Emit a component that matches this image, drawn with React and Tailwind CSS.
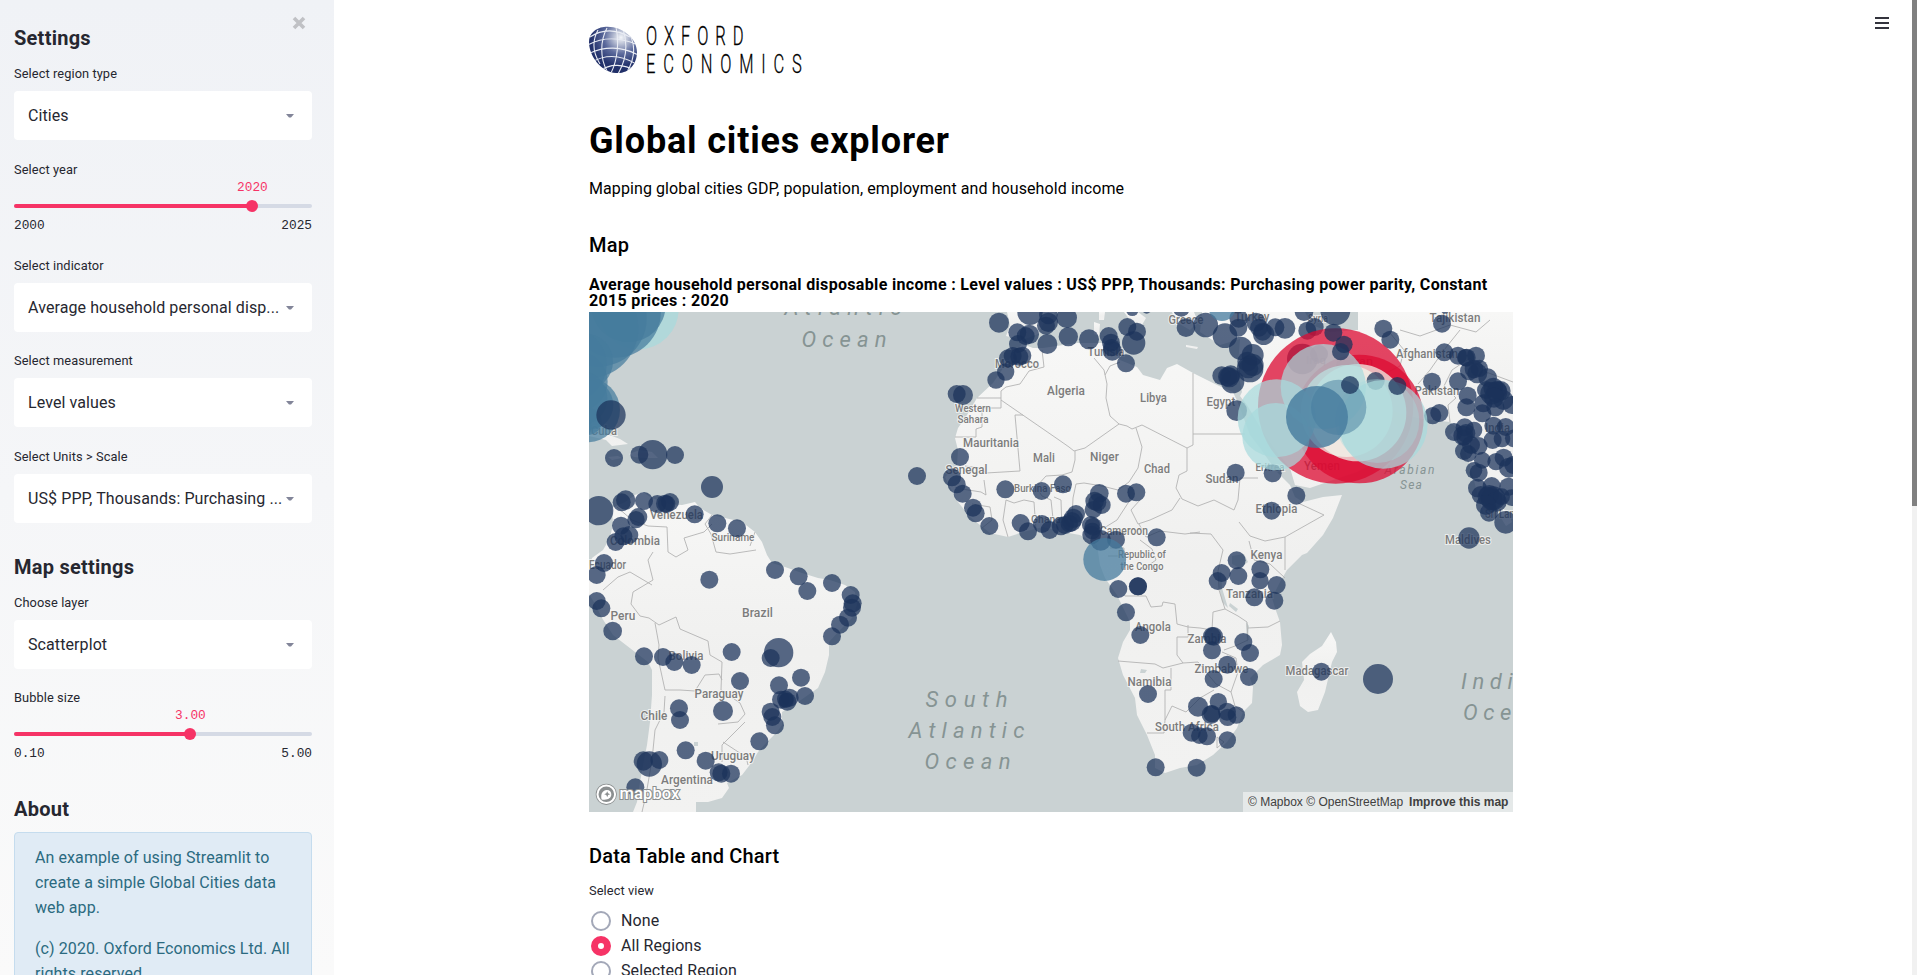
import React from "react";

const LAND = [
  // South America
  "M589 568 592 558 603 550 610 538 613 524 612 508 625 502 635 495 643 492 652 498 668 504 682 505 695 502 700 508 712 515 725 518 742 522 755 532 762 542 767 555 772 563 785 567 802 573 818 578 830 580 845 585 855 592 857 605 852 618 838 632 829 642 829 655 825 672 818 688 798 702 782 712 782 725 777 732 767 742 758 752 752 762 742 775 727 783 729 788 722 798 708 802 696 802 696 812 633 812 637 802 640 782 645 755 647 745 650 722 652 695 652 670 648 662 635 652 613 635 602 618 595 604 589 594Z",
  // Africa
  "M1022 344 1010 358 993 383 977 398 967 415 958 428 955 438 958 450 957 465 945 477 950 487 958 502 970 517 990 533 1008 537 1023 532 1043 527 1063 532 1080 535 1097 545 1100 565 1105 578 1117 595 1130 622 1130 630 1123 642 1118 658 1123 675 1135 698 1137 715 1147 735 1155 755 1155 768 1165 773 1180 768 1197 765 1213 755 1227 742 1237 728 1243 712 1252 703 1253 687 1250 678 1263 665 1280 655 1282 645 1280 622 1275 608 1272 598 1280 582 1287 570 1302 555 1307 553 1323 535 1333 518 1342 495 1323 497 1303 502 1295 497 1290 485 1277 472 1260 448 1250 435 1240 408 1233 392 1217 385 1193 373 1177 364 1167 368 1160 380 1143 375 1137 367 1120 360 1117 350 1103 343 1077 343 1043 348 1033 348Z",
  // Iberia and southern Europe
  "M1007 312 1010 325 1006 336 1022 340 1038 334 1044 322 1056 312Z",
  "M1099 312 1099 320 1104 320 1105 312Z",
  "M1124 312 1130 320 1142 325 1146 318 1138 312Z",
  "M1172 312 1176 322 1190 330 1198 322 1194 312Z",
  "M1094 322 1100 324 1099 336 1094 334Z",
  "M1186 345 1198 347 1197 349 1186 347Z",
  // Asia
  "M1202 312 1200 332 1220 345 1240 339 1238 365 1240 382 1242 392 1240 396 1247 405 1263 432 1277 452 1290 468 1295 485 1310 488 1333 480 1357 472 1377 462 1397 448 1403 432 1390 418 1377 415 1363 405 1356 388 1380 405 1400 414 1423 419 1450 422 1457 428 1450 435 1463 445 1470 465 1477 492 1483 512 1490 518 1500 505 1513 492 1513 312 1358 312 1358 330 1330 332 1312 325 1305 312Z",
  "M1503 509 1508 512 1512 522 1506 526 1501 518Z",
  // Madagascar
  "M1331 632 1336 642 1337 652 1332 662 1325 692 1318 710 1308 712 1300 706 1297 692 1304 680 1302 662 1310 654 1322 646Z",
  // Caribbean islands
  "M589 430 602 434 612 436 620 439 628 444 612 446 606 440 589 436Z",
  "M629 454 640 450 652 452 658 458 645 458 634 457Z",
  "M608 457 618 456 622 458 612 460Z",
];

const BORDERS =
  "M1001 391V408H982V427L976 429 976 437H955M977 398H1001M1001 400 1059 440 1069 447 1074 451 1085 448 1119 424 1127 426 1132 429 1142 425 1187 448V471L1179 475 1176 488 1182 499M1075 451V460L1072 472 1062 475 1046 476 1036 487M1001 391 1006 387 1020 384 1029 371 1044 367 1042 350M1015 415 1020 471 986 473 981 468 965 466M1015 415H1023M1107 384 1104 370 1094 358M1107 384 1106 398 1110 416 1119 424M1105 375 1110 366 1120 362M1193 373V445L1187 448M1193 434H1245M1136 428 1142 447 1138 468 1129 482 1118 490 1102 486 1084 483 1076 484 1073 498 1072 520M962 489 981 492 986 495 984 480M972 504 990 507 992 520 982 528M1008 537 1003 520 1006 500 1014 503 1024 500 1034 502 1036 530M1054 528 1051 500 1042 496 1036 487M1062 531 1061 500 1054 497M1104 528 1117 520 1130 500 1128 488M1140 500 1131 510 1138 524 1150 520 1172 510 1180 498M1182 499 1198 506 1214 500 1234 510 1238 500 1240 478 1258 478M1139 524 1146 537 1160 531 1185 534 1200 532M1140 540 1152 549 1156 560 1142 570M1108 556 1124 556 1124 548 1110 548M1239 522 1250 536 1265 541 1285 537 1324 515 1298 503M1249 541 1254 560 1270 564 1285 578M1285 537V570M1190 533 1211 534 1223 550 1218 571 1219 590 1225 609M1125 596H1146L1151 607 1162 606 1163 602 1175 604 1177 624 1188 627 1200 628 1212 630 1213 612 1225 609 1238 616 1247 622 1248 640 1235 646 1224 650M1248 628 1268 627 1280 621M1177 637V655L1183 663 1163 668 1155 664 1118 661M1177 637H1188V625M1183 663 1198 662 1206 672 1216 684 1231 692 1238 672 1236 658 1222 652M1171 668V690H1165V720L1172 706 1186 712 1200 698 1214 690M1231 692 1235 706 1243 712M1165 720 1164 733H1147M1217 737 1224 742 1217 748ZM617 507 632 520 648 526 667 527 668 552 676 557 688 550 684 538 704 532 712 524M712 515 705 524 711 534 716 552 730 554 756 550M755 532 750 546M653 580 633 592 631 604 640 616 649 618 659 625 676 617 680 629 708 641 710 655 722 662 721 690 740 703 745 714 738 722 718 724M653 580 648 560 653 552M655 623 659 645 658 658 665 690 680 690 695 691 705 675 719 674 722 680M665 696 664 712 655 730 652 760 646 795 642 812M745 722 732 735 722 745 722 762M723 742 746 757 748 765M603 590 618 577 630 572 652 585M1390 333 1404 350 1400 366 1384 374 1367 370M1460 330 1444 350 1430 370 1418 384M1400 330 1420 336 1450 325 1476 332 1490 320M1450 422 1448 405 1456 398 1444 386 1452 370 1470 358 1486 372 1513 382";

// Tiles hold marker lists [x, y, r] at three units per map pixel.
const TILES = [
  {
    x: 585, y: 305,
    dots: [
      [78, 330, 44], [87, 459, 27], [163, 449, 27], [203, 449, 44], [270, 450, 27], [381, 546, 33], [41, 617, 44],
      [122, 585, 29], [110, 592, 27], [177, 588, 27], [217, 597, 27], [240, 596, 27], [255, 591, 27], [245, 597, 26],
      [160, 636, 27], [153, 644, 26], [108, 662, 27], [133, 690, 27], [115, 694, 27], [92, 711, 27],
      [329, 628, 27], [397, 655, 27], [456, 670, 27],
    ],
  },
  {
    x: 585, y: 555,
    dots: [
      [57, 24, 27], [35, 60, 27], [35, 138, 27], [49, 160, 27], [83, 228, 28], [177, 304, 27], [234, 306, 27],
      [268, 321, 27], [320, 330, 27], [373, 74, 27], [570, 45, 27], [641, 64, 27], [667, 108, 27], [741, 84, 27],
      [797, 120, 27], [803, 145, 27], [801, 158, 27], [789, 188, 27], [765, 209, 27], [741, 244, 27], [440, 291, 27],
      [581, 293, 44], [557, 309, 27], [465, 378, 27], [582, 391, 27], [648, 368, 27], [660, 423, 27], [588, 434, 27],
      [614, 428, 27], [601, 432, 25], [607, 440, 27], [604, 437, 22], [557, 470, 27], [562, 486, 27], [570, 511, 27],
      [523, 559, 27], [282, 460, 27], [285, 495, 27], [414, 468, 30], [302, 586, 27], [362, 617, 27], [401, 652, 27],
      [409, 656, 27], [438, 656, 27], [175, 618, 29], [223, 615, 27], [193, 627, 38], [151, 697, 27],
    ],
  },
  {
    x: 890, y: 305,
    dots: [
      [327, 53, 30], [420, 22, 38], [475, 30, 28], [475, 52, 29], [468, 62, 27], [530, 38, 31], [382, 82, 27],
      [418, 88, 29], [407, 93, 27], [384, 117, 27], [472, 117, 30], [535, 95, 29], [597, 103, 30], [656, 93, 27],
      [663, 113, 27], [667, 138, 29], [665, 128, 26], [712, 66, 27], [741, 80, 27], [731, 114, 35], [708, 175, 27],
      [354, 160, 27], [368, 153, 27], [388, 155, 27], [397, 152, 27], [347, 201, 26], [318, 225, 26], [200, 267, 27],
      [219, 270, 30], [210, 456, 27], [81, 513, 27], [186, 517, 27], [200, 538, 27], [218, 566, 27], [249, 608, 27],
      [257, 625, 27], [298, 663, 27], [346, 553, 27], [455, 558, 27], [519, 538, 27], [392, 654, 27], [414, 679, 27],
      [456, 657, 27], [479, 675, 27], [513, 663, 28], [525, 660, 27], [545, 650, 29], [558, 627, 27], [550, 640, 29],
      [538, 656, 26], [628, 565, 28], [614, 588, 28], [622, 592, 27], [635, 600, 27], [610, 614, 26], [708, 566, 27],
      [739, 562, 27], [603, 660, 27], [610, 665, 27], [605, 690, 28], [632, 706, 31], [678, 704, 27], [800, 697, 27],
      [607, 678, 25], [727, 14, 19], [770, 12, 14], [874, 10, 25], [888, 68, 28],
    ],
  },
  {
    x: 1190, y: 305,
    dots: [
      [47, 60, 37], [105, 92, 37], [145, 68, 27], [146, 40, 28], [198, 52, 29], [207, 68, 27], [221, 88, 32],
      [218, 80, 27], [256, 67, 27], [285, 70, 31], [152, 130, 35], [188, 150, 33], [172, 170, 30], [180, 192, 40],
      [188, 180, 33], [175, 190, 30], [95, 212, 28], [113, 215, 29], [128, 230, 35], [122, 210, 29], [118, 217, 30],
      [342, 20, 28], [352, 77, 27], [374, 66, 27], [436, 16, 45], [580, 71, 27], [601, 104, 27], [756, 56, 27],
      [763, 142, 27], [726, 230, 27], [804, 229, 27], [804, 152, 27], [827, 158, 26], [830, 158, 27], [858, 152, 27],
      [838, 198, 28], [852, 192, 28], [862, 205, 30], [868, 190, 26], [893, 218, 28], [888, 255, 27], [910, 248, 30],
      [920, 262, 32], [905, 265, 34], [932, 258, 30], [922, 255, 28], [940, 285, 30], [912, 278, 30], [965, 300, 27],
      [833, 272, 27], [829, 307, 27], [880, 295, 27], [877, 325, 27], [916, 307, 27], [728, 332, 26], [748, 324, 27],
      [792, 381, 27], [824, 367, 27], [820, 392, 30], [828, 385, 28], [823, 398, 24], [852, 375, 25],
      [843, 420, 27], [822, 438, 27], [866, 423, 27], [835, 446, 25], [910, 362, 27], [947, 366, 27],
      [908, 405, 27], [936, 402, 25], [972, 400, 27], [877, 466, 25], [918, 470, 26], [941, 458, 27],
      [957, 488, 30], [970, 480, 27], [852, 496, 25], [866, 503, 27], [862, 549, 28], [905, 543, 27], [955, 545, 27],
      [872, 570, 27], [893, 575, 30], [905, 583, 33], [910, 580, 36], [898, 570, 30], [920, 590, 30], [935, 575, 25],
      [888, 600, 30], [897, 623, 27], [947, 652, 34], [965, 578, 25], [837, 699, 32], [137, 503, 27], [248, 505, 27],
      [319, 572, 27], [245, 617, 27], [140, 317, 31], [765, 14, 12],
    ],
  },
  {
    x: 1080, y: 555,
    dots: [
      [115, 102, 27], [174, 94, 27], [174, 94, 27], [138, 172, 27], [181, 240, 27], [470, 16, 27], [425, 54, 27],
      [413, 78, 27], [475, 63, 27], [541, 43, 27], [540, 77, 26], [590, 90, 27], [523, 127, 27], [583, 137, 27],
      [396, 243, 27], [401, 244, 28], [396, 286, 27], [490, 261, 27], [510, 294, 27], [442, 329, 27], [401, 372, 27],
      [507, 366, 27], [724, 350, 27], [894, 372, 45], [204, 417, 27], [354, 455, 30], [415, 440, 26], [393, 479, 28],
      [396, 476, 26], [441, 470, 27], [443, 487, 26], [469, 480, 26], [335, 533, 27], [358, 542, 25],
      [381, 544, 27], [442, 555, 26], [227, 637, 27], [350, 638, 27],
    ],
  },
];

const LABELS = [
  [604, 436, 26, "Cuba", 12], [676.5, 520, 53, "Venezuela", 12], [733, 542, 43, "Suriname", 10.5], [635, 546, 50, "Colombia", 12],
  [607.5, 569.5, 37, "Ecuador", 12], [623, 621, 25, "Peru", 12], [757.5, 618, 31, "Brazil", 12], [686, 661, 35, "Bolivia", 12],
  [719, 699, 49, "Paraguay", 12], [654, 721, 27, "Chile", 12], [733, 761, 44, "Uruguay", 12], [687, 785, 52, "Argentina", 12],
  [1017, 369, 44, "Morocco", 12], [1106, 357, 37, "Tunisia", 12], [1066, 396, 38, "Algeria", 12], [1153.5, 403, 27, "Libya", 12],
  [973, 413, 36, "Western", 10.5], [973, 424, 31, "Sahara", 10.5], [991, 448, 56, "Mauritania", 12], [1044, 463, 22, "Mali", 12],
  [1104.5, 462, 29, "Niger", 12], [1157, 474, 26, "Chad", 12], [966.5, 475, 42, "Senegal", 12], [1042.5, 493, 57, "Burkina Faso", 10.5],
  [1046, 524, 30, "Ghana", 11], [1124, 536, 48, "Cameroon", 12], [1142, 559, 48, "Republic of", 10.5], [1142, 570.5, 43, "the Congo", 10.5],
  [1186, 324.5, 35, "Greece", 12], [1252, 322, 35, "Turkey", 12], [1221, 407, 29, "Egypt", 12], [1222, 484, 33, "Sudan", 12],
  [1270, 472, 29, "Eritrea", 10], [1276.5, 514, 42, "Ethiopia", 12], [1266.5, 560, 32, "Kenya", 12], [1322, 471, 36, "Yemen", 12],
  [1318, 323, 20, "Syria", 10], [1316, 365, 20, "Iraq", 11], [1362, 366, 22, "Iran", 11],
  [1455, 323, 51, "Tajikistan", 12], [1427, 358.5, 62, "Afghanistan", 12], [1437, 396, 45, "Pakistan", 12], [1497.5, 433, 25, "India", 12],
  [1505, 519, 40, "Sri Lanka", 12], [1468, 545, 46, "Maldives", 12], [1249.5, 599, 47, "Tanzania", 12], [1153, 632, 36, "Angola", 12],
  [1207, 644, 39, "Zambia", 12], [1221.5, 674, 54, "Zimbabwe", 12], [1317, 676, 63, "Madagascar", 12], [1149.5, 687, 44, "Namibia", 12],
  [1187, 732, 64, "South Africa", 12],
];

const SEAS = [
  [843, 316, 117, "Atlantic", 22], [844, 347.5, 85, "Ocean", 22], [966.5, 707.5, 82, "South", 22], [966.5, 739, 116, "Atlantic", 22],
  [967.5, 770, 86, "Ocean", 22], [1409.5, 474.5, 50, "Arabian", 12], [1411, 490, 22, "Sea", 12],
];

function Map() {
  return (
    <svg viewBox="589 312 924 500" className="block h-[500px] w-full bg-[#cad2d3]">
      <defs>
        <linearGradient id="land" x1="0" y1="0" x2="0" y2="1">
          <stop offset="0" stopColor="#f7f7f6" />
          <stop offset=".5" stopColor="#f0f0ef" />
          <stop offset="1" stopColor="#f2f2f1" />
        </linearGradient>
      </defs>
      <g fill="url(#land)">{LAND.map((d) => <path key={d} d={d} />)}</g>
      <path d="M1218 582l3-12 1 18 6 20-6-6zM1230 603l8 6-2 3-7-6zM1246 622l3 4-2 18zM1232 556l12-2 4 8-8 6-8-4zM1141 669l6 1-2 3h-5zM694 742h4v4h-4z" fill="#cad2d3" />
      <path d={BORDERS} fill="none" stroke="#b3b3b3" strokeWidth=".9" strokeLinejoin="round" />
      <g transform="translate(0 -.7)" fontFamily="Roboto, sans-serif" fontWeight="500" textAnchor="middle" fill="#7c7c7c" stroke="#f6f6f5" strokeWidth="2" strokeOpacity=".8" paintOrder="stroke">
        {LABELS.map(([x, y, w, t, s]) => (
          <text key={t} x={x} y={y} fontSize={s} textLength={w} lengthAdjust="spacingAndGlyphs">{t}</text>
        ))}
      </g>
      <g transform="translate(0 -1)" fontFamily="Roboto, sans-serif" fontStyle="italic" fill="#869493">
        {SEAS.map(([x, y, w, t, s]) => (
          <text key={t + y} x={x - w / 2} y={y} fontSize={s} textLength={w}>{t}</text>
        ))}
        <text x="1461" y="690" fontSize="22" letterSpacing="5.6">Indian</text>
        <text x="1463" y="721" fontSize="22" letterSpacing="5.6">Ocean</text>
      </g>

      {/* Northern America cluster */}
      <g transform="translate(585 305) scale(.33333)">
        <circle cx="160" cy="12" r="121" fill="#a8dadc" fillOpacity=".75" />
        <g fill="#457b9d" fillOpacity=".72">
          <circle cx="130" cy="0" r="112" />
          <circle cx="90" cy="20" r="138" />
          <circle cx="40" cy="40" r="145" />
          <circle cx="10" cy="70" r="150" />
          <circle cx="0" cy="170" r="84" />
          <circle cx="-20" cy="230" r="88" />
          <circle cx="-45" cy="180" r="110" />
          <circle cx="8" cy="315" r="97" />
          <circle cx="10" cy="300" r="75" />
          <circle cx="-15" cy="280" r="82" />
          <circle cx="-20" cy="365" r="40" />
          <circle cx="10" cy="350" r="40" />
        </g>
      </g>

      {TILES.map((t) => (
        <g key={`${t.x}-${t.y}`} transform={`translate(${t.x} ${t.y}) scale(.33333)`} fill="#1b335b" fillOpacity=".73">
          {t.dots.map(([x, y, r], i) => <circle key={i} cx={x} cy={y} r={r} />)}
        </g>
      ))}
      <circle cx="1104.700" cy="559.500" r="21.400" fill="#457b9d" fillOpacity=".75" />

      {/* Gulf region cluster */}
      <g transform="translate(1190 305) scale(.33333)">
        <circle cx="96" cy="8" r="40" fill="#457b9d" fillOpacity=".75" />
        <g fill="#1b335b" fillOpacity=".73">
          <circle cx="337" cy="162" r="46" />
          <circle cx="387" cy="147" r="27" />
          <circle cx="465" cy="182" r="27" />
        </g>
        <g fill="#dc0a32" fillOpacity=".75">
          <circle cx="437" cy="303" r="233" />
          <circle cx="508" cy="342" r="193" />
        </g>
        <g fill="#f1faee" fillOpacity=".72">
          <circle cx="503" cy="323" r="146" />
          <circle cx="470" cy="318" r="138" />
        </g>
        <circle cx="557" cy="228" r="27" fill="#1b335b" fillOpacity=".73" />
        <g fill="#a8dadc" fillOpacity=".72">
          <circle cx="400" cy="245" r="128" />
          <circle cx="580" cy="358" r="133" />
          <circle cx="562" cy="348" r="126" fillOpacity=".4" />
          <circle cx="260" cy="340" r="117" />
          <circle cx="258" cy="395" r="101" />
        </g>
        <g fill="#457b9d">
          <circle cx="446" cy="307" r="83" fillOpacity=".5" />
          <circle cx="381" cy="336" r="93" fillOpacity=".8" />
        </g>
        <g fill="#1b335b" fillOpacity=".75">
          <circle cx="430" cy="83" r="27" />
          <circle cx="462" cy="118" r="26" />
          <circle cx="452" cy="140" r="26" />
          <circle cx="480" cy="240" r="27" />
          <circle cx="622" cy="243" r="27" />
        </g>
      </g>

      <g>
        <circle cx="606.3" cy="794.3" r="8.8" fill="#8b8f90" stroke="#8b8f90" strokeWidth="3.600" />
        <circle cx="606.3" cy="794.3" r="8.800" fill="#8b8f90" stroke="#fff" strokeWidth="2" />
        <path d="M601.600 799.400c-1.200-4.600.4-9 5.200-9.400 2.900 0 4.600 2 4.500 4.500-.2 4.200-4.500 5.900-9.700 4.900z" fill="#fff" />
        <path d="M607.200 791.200l.9 2.100 2.100.9-2.100.9-.9 2.100-.9-2.100-2.100-.9 2.100-.9z" fill="#8b8f90" />
        <text x="619.500" y="799" fontFamily="Roboto, sans-serif" fontSize="17" fontWeight="500" textLength="60" lengthAdjust="spacingAndGlyphs" fill="#fff" stroke="#8b8f90" strokeWidth="2.200" paintOrder="stroke">mapbox</text>
      </g>
    </svg>
  );
}

function Logo() {
  return (
    <svg viewBox="589 20 220 60" className="block h-[60px] w-[220px]">
      <defs>
        <radialGradient id="globe" cx=".66" cy=".24" r=".85">
          <stop offset="0" stopColor="#f4f6fa" />
          <stop offset=".14" stopColor="#c3c9da" />
          <stop offset=".4" stopColor="#5c6a9c" />
          <stop offset=".68" stopColor="#26356f" />
          <stop offset="1" stopColor="#1a2860" />
        </radialGradient>
        <clipPath id="globeEdge"><path d="M604 27c-9 1-15 7-15 15 0 14 12 30 27 31 13 1 21-9 21-21 0-14-16-27-33-25z" /></clipPath>
      </defs>
      <g clipPath="url(#globeEdge)">
        <rect x="588" y="26" width="50" height="48" fill="url(#globe)" />
        <path d="M590 37c12-8 26-8 40 0M588 45c14-8 32-8 50 0M588 54c16-8 34-8 50 1M592 62c14-8 30-7 46 3M600 71c10-8 24-7 36 0M598 30c-6 11-5 23 2 34M607 28c-7 13-7 30 0 43M616 27c3 14 2 32-5 46M623 29c5 15 3 31-5 45M630 35c6 12 4 25-3 37" fill="none" stroke="#e9ecf4" strokeWidth="1.100" />
      </g>
      <g fontFamily="Roboto, sans-serif" fontSize="25" fontWeight="300" fill="#000" stroke="#000" strokeWidth=".3">
        <text transform="translate(646 44.500) scale(.66 1)" textLength="148">OXFORD</text>
        <text transform="translate(646 72.500) scale(.66 1)" textLength="236">ECONOMICS</text>
      </g>
    </svg>
  );
}

function Select({ label, value, className = "" }) {
  return (
    <div className={className}>
      <div className="text-[12.8px] leading-5">{label}</div>
      <div className="mt-[7px] flex h-[49px] items-center rounded bg-white pl-3.5 pr-[18px]">
        <span className="grow whitespace-nowrap text-base">{value}</span>
        <svg viewBox="0 0 8 4" className="h-1 w-2 shrink-0"><path d="M0 0h8L5 3.500H3z" fill="#828599" /></svg>
      </div>
    </div>
  );
}

function Slider({ label, value, min, max, pct, className = "" }) {
  return (
    <div className={className}>
      <div className="text-[12.8px] leading-5">{label}</div>
      <div className="relative mt-6 h-1 rounded-full bg-[#d5dae5]">
        <div className="h-1 rounded-full bg-[#f63366]" style={{ width: `${pct}%` }} />
        <div className="absolute -top-1 size-3 -translate-x-1/2 rounded-full bg-[#f63366]" style={{ left: `${pct}%` }} />
        <div className="absolute -top-[26px] -translate-x-1/2 font-['Liberation_Mono',monospace] text-[12.8px] leading-5 tracking-normal text-[#f63366]" style={{ left: `${pct}%` }}>{value}</div>
      </div>
      <div className="mt-2 flex justify-between font-['Liberation_Mono',monospace] text-[12.8px] leading-5 tracking-normal">
        <span>{min}</span>
        <span>{max}</span>
      </div>
    </div>
  );
}

function Radio({ label, checked }) {
  return (
    <div className="flex h-[25px] items-center gap-2.5 pl-0.5">
      <div className={checked ? "size-5 rounded-full border-[7px] border-[#f63366] bg-white" : "size-5 rounded-full border-2 border-[#a3a8b8] bg-white"} />
      <span className="text-base">{label}</span>
    </div>
  );
}

export default function App() {
  return (
    <div className="flex h-screen w-full overflow-hidden bg-white font-['Roboto',sans-serif] tracking-[0.09px] text-[#262730]">
      <aside className="w-[334px] shrink-0 overflow-hidden bg-linear-to-b from-[#f0f2f6] to-[#fafafa] pl-3.5 pr-[22px] pt-[25px]">
        <div className="flex h-[26px] justify-between">
          <h2 className="text-xl font-bold leading-[26px] tracking-[0.25px]">Settings</h2>
          <svg viewBox="0 0 14 14" className="-mt-[9px] mr-1.5 size-3.5"><path d="M2 2l10 10M12 2L2 12" stroke="#c0c1c5" strokeWidth="3.600" /></svg>
        </div>
        <Select className="mt-[13px]" label="Select region type" value="Cities" />
        <Slider className="mt-5" label="Select year" value="2020" min="2000" max="2025" pct={80} />
        <Select className="mt-5" label="Select indicator" value="Average household personal disp..." />
        <Select className="mt-[19px]" label="Select measurement" value="Level values" />
        <Select className="mt-[20px]" label="Select Units > Scale" value="US$ PPP, Thousands: Purchasing ..." />
        <h2 className="mt-[31px] text-xl font-bold leading-[26px] tracking-[0.25px]">Map settings</h2>
        <Select className="mt-[13px]" label="Choose layer" value="Scatterplot" />
        <Slider className="mt-[19px]" label="Bubble size" value="3.00" min="0.10" max="5.00" pct={59.2} />
        <h2 className="mt-8 text-xl font-bold leading-[26px] tracking-[0.25px]">About</h2>
        <div className="mt-[10px] h-[220px] rounded border border-[#c5dcee] bg-[#e0ebf5] px-5 pt-3 leading-[25px] text-[#2b6a80]">
          <p>An example of using Streamlit to<br />create a simple Global Cities data<br />web app.</p>
          <p className="mt-4">(c) 2020. Oxford Economics Ltd. All<br />rights reserved</p>
        </div>
      </aside>

      <main className="ml-[255px] w-[924px] shrink-0 pt-5">
        <Logo />
        <h1 className="mt-[38px] text-4xl font-bold leading-[46px] tracking-[0.83px] text-black">Global cities explorer</h1>
        <p className="mt-3 text-base leading-[26px] text-black">Mapping global cities GDP, population, employment and household income</p>
        <h3 className="mt-[30px] text-xl font-medium leading-[26px] tracking-[0.18px] text-black">Map</h3>
        <div className="mt-[19px] whitespace-nowrap text-base font-bold leading-4 tracking-[0.325px] text-black">
          Average household personal disposable income : Level values : US$ PPP, Thousands: Purchasing power parity, Constant<br />2015 prices : 2020
        </div>
        <div className="relative mt-[3px]">
          <Map />
          <div className="absolute bottom-0 right-0 flex h-5 w-[270px] items-center whitespace-nowrap bg-white/50 pl-[5px] font-['Liberation_Sans',sans-serif] text-xs tracking-normal text-[#404040]">
            © Mapbox © OpenStreetMap <b className="ml-1.5">Improve this map</b>
          </div>
        </div>
        <h3 className="mt-[31px] text-xl font-medium leading-[26px] tracking-[0.18px] text-black">Data Table and Chart</h3>
        <div className="mt-3 text-[12.8px] leading-5">Select view</div>
        <div className="mt-[7px]">
          <Radio label="None" />
          <Radio label="All Regions" checked />
          <Radio label="Selected Region" />
        </div>
      </main>

      <div className="ml-auto flex">
        <div className="mr-[23px] mt-[17px] flex h-3 w-3.5 flex-col justify-between">
          <span className="h-0.5 bg-[#33343d]" />
          <span className="h-0.5 bg-[#33343d]" />
          <span className="h-0.5 bg-[#33343d]" />
        </div>
        <div className="w-[5px] bg-[#f1f1f1]">
          <div className="h-[506px] bg-[#808080]" />
        </div>
      </div>
    </div>
  );
}
